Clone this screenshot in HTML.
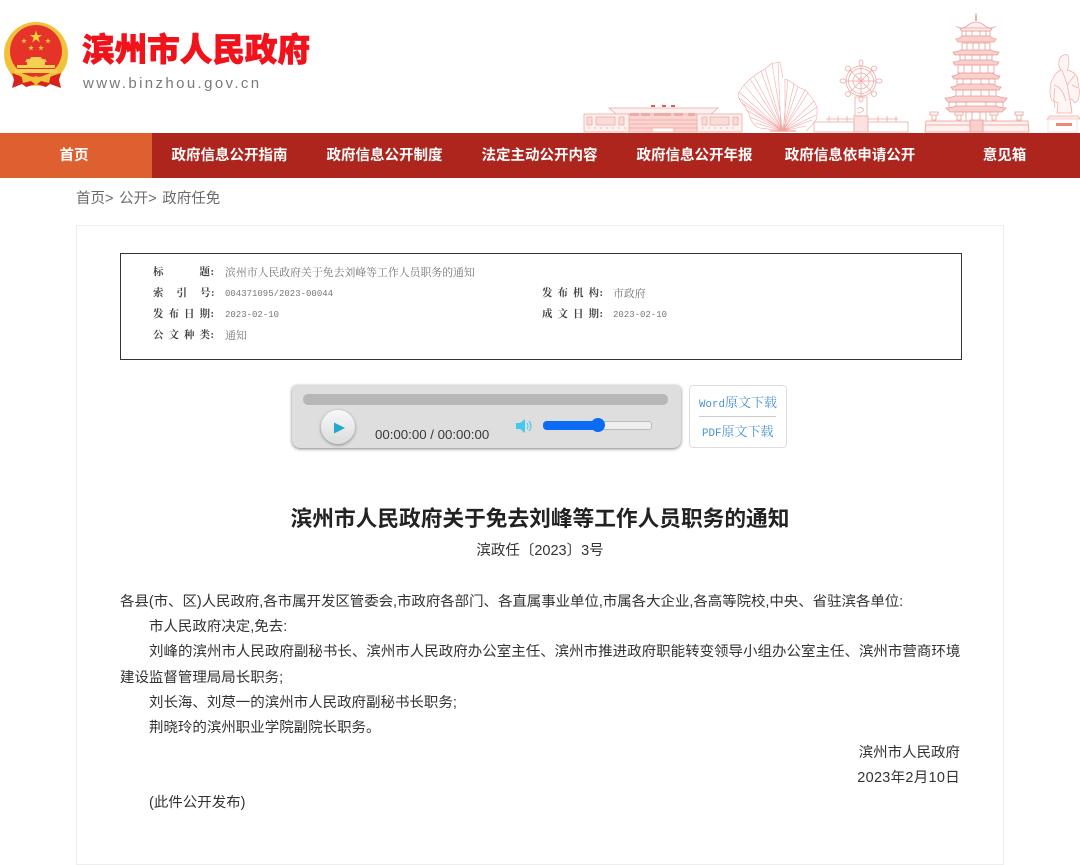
<!DOCTYPE html>
<html lang="zh-CN"><head><meta charset="utf-8"><title>滨州市人民政府关于免去刘峰等工作人员职务的通知</title>
<style>
html,body{margin:0;padding:0;background:#fff}
body{width:1080px;height:834px;position:relative;overflow:hidden;font-family:"Liberation Sans","Noto Sans CJK SC",sans-serif;color:#333}
.a{position:absolute;white-space:nowrap}
.nav{position:absolute;top:133px;left:0;width:1080px;height:45px;background:#ae251d}
.nav .h{position:absolute;left:0;top:0;width:152px;height:45px;background:#de5f30}
.nav span{position:absolute;top:0;line-height:47px;color:#fff;font-weight:700;font-size:14.5px;transform:translateX(-50%);white-space:nowrap}
.card{position:absolute;left:76px;top:225px;width:928px;height:640px;border:1px solid #eee;box-sizing:border-box}
.meta{position:absolute;left:120px;top:253px;width:842px;height:107px;border:1px solid #333;box-sizing:border-box}
.m{position:absolute;font-family:"Liberation Mono","Noto Serif CJK SC",serif;font-size:9px;line-height:14px;white-space:nowrap;color:#777}
.v{font-size:10.87px;font-family:"Liberation Serif","Noto Serif CJK SC",serif}
.l{font-family:"Liberation Serif","Noto Serif CJK SC",serif;font-size:10.5px;color:#444;font-weight:700;letter-spacing:5px}
.l u{text-decoration:none;margin-left:-4.5px}
.p{position:absolute;left:120px;font-size:14.48px;line-height:25px;color:#333;white-space:nowrap}
.dl{position:absolute;font-family:"Liberation Mono","Noto Serif CJK SC",serif;font-size:10.83px;color:#4a90d9;white-space:nowrap;line-height:16px}
.dl b{font-weight:400;font-family:"Noto Serif CJK SC",serif;font-size:13px}
</style></head><body>

<svg class="a" style="left:0;top:18px" width="74" height="76" viewBox="0 18 74 76">
<defs><path id="s" d="M0-1 .225-.31H.95L.363.118.588.81 0 .382-.588.81-.363.118-.95-.31H-.225z" fill="#f6d23a"/></defs>
<circle cx="36" cy="54" r="32" fill="#efc23a"/>
<circle cx="36" cy="51" r="26" fill="#e5332a"/>
<use href="#s" transform="translate(36 37) scale(6.5)"/>
<use href="#s" transform="translate(24 41) scale(3)"/>
<use href="#s" transform="translate(48 41) scale(3)"/>
<use href="#s" transform="translate(31 48) scale(3)"/>
<use href="#s" transform="translate(41 48) scale(3)"/>
<path d="M31 57h10l1 2h3l2 3h-2v3h-18v-3h-2l2-3h3z" fill="#f6cf55"/>
<path d="M17 65h38v3H17zM15 69h42v4H15z" fill="#f6cf55"/>
<path d="M12 73 14 80 12 88 22 84 26 87 36 84 46 87 50 84 61 88 59 80 61 73 52 76 46 80H26L20 76Z" fill="#d8231c"/>
<path d="M21 74Q28 74 31 78L36 76 41 78Q44 74 51 74L49 83 41 81 36 85 31 81 23 83Z" fill="#efc23a"/>
</svg>

<div class="a" style="left:82px;top:28px;font-size:32.6px;line-height:44px;font-weight:900;color:#f0131b;-webkit-text-stroke:.7px #f0131b">滨州市人民政府</div>
<div class="a" style="left:83px;top:75px;font-size:15px;line-height:18px;letter-spacing:2.38px;color:#7a7a7a">www.binzhou.gov.cn</div>

<svg class="a" style="left:570px;top:0;filter:blur(.35px)" width="510" height="133" viewBox="570 0 510 133" fill="none" stroke="#f0a5a0" stroke-width=".75">
<path d="M584 114h158v18H584zM609 108h109l-7 6h-95z" fill="#fdf0ef"/>
<path d="M629 114h68v18h-68z" fill="#f9d5d2"/>
<path d="M587 117h5v8h-5zM596 117h19v8h-19zM619 117h5v8h-5zM702 117h5v8h-5zM710 117h19v8h-19zM733 117h5v8h-5z" fill="#f9dcda"/>
<path d="M651 105h4v2h-4zM662 105h4v2h-4zM671 105h4v2h-4z" fill="#e45b52" stroke="none"/>
<path d="M630 113h9v3h-9zM641 113h9v3h-9zM654 113h17v3h-17zM674 113h9v3h-9zM688 113h7v3h-7z" fill="#f0aaa5" stroke="none"/>
<path d="M588 128h150" stroke-dasharray="2 4"/>
<path d="M629 120h68M629 124h68M629 128h68"/>
<path d="M652 128h22v4h-22z" fill="#fff"/>
<g stroke-width=".55">
<path d="M783 131 760 128M783 131 755 123M783 131 750 117M783 131 746 110M783 131 742 103M783 131 739 98M783 131 739 92M783 131 744 85M783 131 750 79M783 131 754 76M783 131 761 71M783 131 765 69M783 131 772 63M781 131 778 62M785 131 785 79M783 131 788 80M783 131 794 84M783 131 798 87M783 131 805 90M783 131 808 93M783 131 814 101M783 131 817 107M783 131 816 115M783 131 812 120M783 131 806 126"/>
<path d="M739 92Q737 98 742 103T750 117T760 128M739 92l5-7 6-6 4-3 7-5 4-2 7-6 4 0 4-1 3 16M785 79l3 1 6 4 4 3 7 3 3 3 6 8 3 6 0 8-1 5-4 5-6 6"/>
<path d="M770 131h26" stroke-width="1.2"/>
</g>
<g>
<circle cx="861" cy="81" r="15"/><circle cx="861" cy="81" r="12.500"/><circle cx="861" cy="81" r="8"/><circle cx="861" cy="81" r="3" stroke-dasharray="1 1"/>
<path d="M861 66V96M846 81H876M850.500 70.500 871.500 91.500M871.500 70.500 850.500 91.500"/>
<ellipse cx="861" cy="63" rx="2" ry="3"/><ellipse cx="861" cy="99" rx="2" ry="3"/>
<ellipse cx="843" cy="81" rx="3" ry="2"/><ellipse cx="879" cy="81" rx="3" ry="2"/>
<circle cx="848" cy="68.500" r="2.500"/><circle cx="874" cy="68.500" r="2.500"/><circle cx="848" cy="94" r="2.500"/><circle cx="874" cy="94" r="2.500"/>
<path d="M855 97h12v19h-12z"/><path d="M857 109q4-3 6 0t-6 4"/>
<path d="M854 116h14v16h-14z" fill="#fbe2e0"/>
<path d="M814 122h40v10h-40zM868 122h40v10h-40zM829 116v6M838 116v6M847 116v6M878 116v6M887 116v6M896 116v6M826 119h28M868 119h30"/>
</g>
<g stroke="#ec9a94" stroke-width=".8">
<path d="M976 15v6M976 13.500v1" stroke-width="1.600"/>
<path d="M960 29q5-1 8-4 8-6 16 0 3 3 8 4l-2 2h-28z" fill="#fdf0ef"/>
<path d="M956 26q2 2 6 2h28q4 0 6-2"/>
<path d="M962 31h28v5h-28zM966 31v5M972 31v5M980 31v5M986 31v5"/>
<path d="M956 39q3 0 6-3h28q3 3 6 3l-2 3h-36z" fill="#f9d0cd"/>
<path d="M962 43h28v8h-28zM967 43v8M973 43v8M979 43v8M985 43v8"/>
<path d="M953 52q4 0 8-2h30q4 2 8 2l-2 3h-42z" fill="#f9d0cd"/>
<path d="M960 55h32v6h-32zM965 55v6M972 55v6M980 55v6M987 55v6"/>
<path d="M953 62q4 0 8-2h30q4 2 8 2l-2 3h-42z" fill="#f9d0cd"/>
<path d="M958 65h36v8h-36zM964 65v8M972 65v8M980 65v8M988 65v8"/>
<path d="M952 76q4 0 8-3h32q4 3 8 3l-2 3h-44z" fill="#f9d0cd"/>
<path d="M957 79h38v6h-38zM963 79v6M971 79v6M981 79v6M989 79v6"/>
<path d="M951 87q4 0 8-3h34q4 3 8 3l-2 3h-46z" fill="#f9d0cd"/>
<path d="M956 90h40v7h-40zM963 90v7M971 90v7M981 90v7M989 90v7"/>
<path d="M945 98q5 0 10-2h42q5 2 10 2l-3 4h-56z" fill="#f9d0cd"/>
<path d="M949 102h54v7h-54zM956 102v7M966 102v7M986 102v7M996 102v7"/>
<path d="M946 108q5 0 10-2h40q5 2 10 2l-4 4h-52z" fill="#f9d0cd"/>
<path d="M966 112h20v20h-20zM972 112v20M980 112v20"/>
<path d="M926 121h102l1 11H925z" fill="#fdf0ef"/>
<path d="M970 120h13v12h-13z" fill="#f8cfcc"/>
<path d="M926 125h44M983 125h45"/>
<path d="M930 112h8v3h-8zM932 115h4v5h-4zM955 112h8v3h-8zM957 115h4v5h-4zM990 112h8v3h-8zM992 115h4v5h-4zM1015 112h8v3h-8zM1017 115h4v5h-4z"/>
</g>
<g stroke="#f2aaa5" stroke-width=".7">
<path d="M1064 55q3-1 4 1l1 6q0 5-2 8 5 1 8 4 3 3 3 8l1 6q1 7-1 12l-3 3-3-4-2 1 2 13h-15l1-10-5-2q-3-2-3-10 0-8 3-13 3-6 8-8-3-4-2-9 1-5 5-6z" fill="#fef6f5"/>
<path d="M1062 70l5 14 5 27M1054 85q8 2 12 16M1075 75l-8 10M1055 88q-2 10 0 20M1072 85l6 3"/>
<path d="M1050 116h28l2 3h-33z" fill="#fdecea"/>
<path d="M1048 119h29v13h-29z" stroke="#f9d5d2"/>
<path d="M1056 123h16v3h-16z" fill="#ec8880" stroke="none"/>
</g>
</svg>

<div class="nav"><div class="h"></div>
<span style="left:74px">首页</span>
<span style="left:229.500px">政府信息公开指南</span>
<span style="left:384.500px">政府信息公开制度</span>
<span style="left:539.500px">法定主动公开内容</span>
<span style="left:694.500px">政府信息公开年报</span>
<span style="left:850px">政府信息依申请公开</span>
<span style="left:1004.500px">意见箱</span>
</div>

<div class="a" style="left:76px;top:187.500px;font-size:14.500px;line-height:22px;color:#6a6a6a;word-spacing:1.600px">首页&gt; 公开&gt; 政府任免</div>
<div class="card"></div>

<div class="meta"></div>
<div class="m l" style="left:153px;top:266px">标<span style="display:inline-block;width:31px"></span>题<u>:</u></div>
<div class="m v" style="left:225px;top:265.500px">滨州市人民政府关于免去刘峰等工作人员职务的通知</div>
<div class="m l" style="left:153px;top:287px">索<span style="display:inline-block;width:8px"></span>引<span style="display:inline-block;width:8px"></span>号<u>:</u></div>
<div class="m" style="left:225px;top:287px">004371095/2023-00044</div>
<div class="m l" style="left:153px;top:308px">发布日期<u>:</u></div>
<div class="m" style="left:225px;top:308px">2023-02-10</div>
<div class="m l" style="left:153px;top:329px">公文种类<u>:</u></div>
<div class="m v" style="left:225px;top:328.500px">通知</div>
<div class="m l" style="left:542px;top:287px">发布机构<u>:</u></div>
<div class="m v" style="left:613px;top:286.500px">市政府</div>
<div class="m l" style="left:542px;top:308px">成文日期<u>:</u></div>
<div class="m" style="left:613px;top:308px">2023-02-10</div>

<div class="a" style="left:292px;top:385px;width:389px;height:63px;background:#dedede;border-radius:5px 5px 8px 8px;box-shadow:0 1px 3px rgba(0,0,0,.5)"></div>
<div class="a" style="left:303px;top:394px;width:365px;height:11px;background:#b7b7b7;border-radius:5px"></div>
<div class="a" style="left:321px;top:410px;width:34px;height:34px;border-radius:50%;background:linear-gradient(#f8f8f8,#dcdcdc);box-shadow:0 1px 3px rgba(0,0,0,.4)"></div>
<svg class="a" style="left:333px;top:421px" width="13" height="14"><path d="M1 1.500 12 7 1 12.500z" fill="#1fa9cf"/></svg>
<div class="a" style="left:375px;top:427px;font-size:13.250px;line-height:16px;color:#3a3a3a">00:00:00 / 00:00:00</div>
<svg class="a" style="left:516px;top:418px" width="19" height="16"><path d="M0 5h4l5-4v14l-5-4H0z" fill="#46c8ee"/><path d="M11 5q2 3 0 6M13 3q4 5 0 10" fill="none" stroke="#46c8ee" stroke-width="1.100"/></svg>
<div class="a" style="left:543px;top:421px;width:107px;height:7px;background:#efefef;border:1px solid #bbb;border-radius:3px"></div>
<div class="a" style="left:543px;top:421px;width:55px;height:9px;background:#0a6cf5;border-radius:4px"></div>
<div class="a" style="left:591px;top:418px;width:14px;height:14px;background:#0a6cf5;border-radius:50%"></div>

<div class="a" style="left:689px;top:385px;width:98px;height:63px;box-sizing:border-box;background:#fff;border:1px solid #ddd;border-radius:4px"></div>
<div class="a" style="left:699px;top:416px;width:77px;height:1px;background:#ccc"></div>
<div class="dl" style="left:699px;top:394px">Word<b>原文下载</b></div>
<div class="dl" style="left:702px;top:423px">PDF<b>原文下载</b></div>

<div class="a" style="left:0;width:1080px;top:503px;text-align:center;font-size:21.700px;line-height:32px;font-weight:700;color:#222">滨州市人民政府关于免去刘峰等工作人员职务的通知</div>
<div class="a" style="left:0;width:1080px;top:539px;text-align:center;font-size:14.500px;line-height:25px;color:#333">滨政任〔2023〕3号</div>

<div class="p" style="top:590px;letter-spacing:-.05px">各县(市、区)人民政府,各市属开发区管委会,市政府各部门、各直属事业单位,市属各大企业,各高等院校,中央、省驻滨各单位:</div>
<div class="p" style="top:615px;left:149px">市人民政府决定,免去:</div>
<div class="p" style="top:640px;left:149px;letter-spacing:.02px">刘峰的滨州市人民政府副秘书长、滨州市人民政府办公室主任、滨州市推进政府职能转变领导小组办公室主任、滨州市营商环境</div>
<div class="p" style="top:666px">建设监督管理局局长职务;</div>
<div class="p" style="top:691px;left:149px">刘长海、刘荩一的滨州市人民政府副秘书长职务;</div>
<div class="p" style="top:716px;left:149px">荆晓玲的滨州职业学院副院长职务。</div>
<div class="p" style="top:741px;left:auto;right:120px">滨州市人民政府</div>
<div class="p" style="top:766px;left:auto;right:120px;letter-spacing:.3px">2023年2月10日</div>
<div class="p" style="top:791px;left:149px">(此件公开发布)</div>
</body></html>
